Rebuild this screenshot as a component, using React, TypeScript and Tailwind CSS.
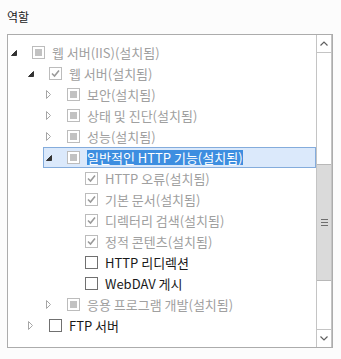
import React from 'react';

type Row = {
  level: number;
  exp: 'open' | 'closed' | 'none';
  cb: 'ind' | 'chk' | 'empty';
  text: string;
  enabled?: boolean;
  selected?: boolean;
};

const rows: Row[] = [
  { level: 0, exp: 'open', cb: 'ind', text: '웹 서버(IIS)(설치됨)' },
  { level: 1, exp: 'open', cb: 'chk', text: '웹 서버(설치됨)' },
  { level: 2, exp: 'closed', cb: 'ind', text: '보안(설치됨)' },
  { level: 2, exp: 'closed', cb: 'ind', text: '상태 및 진단(설치됨)' },
  { level: 2, exp: 'closed', cb: 'ind', text: '성능(설치됨)' },
  { level: 2, exp: 'open', cb: 'ind', text: '일반적인 HTTP 기능(설치됨)', selected: true },
  { level: 3, exp: 'none', cb: 'chk', text: 'HTTP 오류(설치됨)' },
  { level: 3, exp: 'none', cb: 'chk', text: '기본 문서(설치됨)' },
  { level: 3, exp: 'none', cb: 'chk', text: '디렉터리 검색(설치됨)' },
  { level: 3, exp: 'none', cb: 'chk', text: '정적 콘텐츠(설치됨)' },
  { level: 3, exp: 'none', cb: 'empty', text: 'HTTP 리디렉션', enabled: true },
  { level: 3, exp: 'none', cb: 'empty', text: 'WebDAV 게시', enabled: true },
  { level: 2, exp: 'closed', cb: 'ind', text: '응용 프로그램 개발(설치됨)' },
  { level: 1, exp: 'closed', cb: 'empty', text: 'FTP 서버', enabled: true },
];

const indent = ['pl-0', 'pl-[17px]', 'pl-[35px]', 'pl-[53px]'];

function Expander({ kind }: { kind: Row['exp'] }) {
  if (kind === 'open')
    return (
      <svg width="6" height="6" viewBox="0 0 6 6">
        <polygon points="5.5,0.5 5.5,5.5 0.5,5.5" fill="#333" stroke="#333" strokeWidth="1" />
      </svg>
    );
  if (kind === 'closed')
    return (
      <svg width="6" height="9" viewBox="0 0 6 9">
        <polygon points="0.5,0.5 4.5,4.5 0.5,8.5" fill="none" stroke="#a6a6a6" strokeWidth="1" />
      </svg>
    );
  return null;
}

function Check({ kind }: { kind: Row['cb'] }) {
  if (kind === 'empty')
    return <span className="w-[13px] h-[13px] border border-[#707070] bg-white shrink-0" />;
  if (kind === 'ind')
    return (
      <span className="w-[13px] h-[13px] border border-[#bcbcbc] bg-white shrink-0 flex items-center justify-center">
        <span className="w-[7px] h-[7px] bg-[#c2c2c2]" />
      </span>
    );
  return (
    <span className="w-[13px] h-[13px] border border-[#bcbcbc] bg-white shrink-0 flex items-center justify-center">
      <svg width="11" height="11" viewBox="0 0 11 11">
        <path d="M2 5.5 L4.5 8 L9 2.5" fill="none" stroke="#9a9a9a" strokeWidth="1.6" />
      </svg>
    </span>
  );
}

function TreeRow({ row }: { row: Row }) {
  return (
    <div className={`h-[21px] flex ${indent[row.level]}`}>
      <div
        className={`flex-1 flex items-center border ${
          row.selected ? 'bg-[#dbe9fb] border-[#84acdc]' : 'border-transparent'
        }`}
      >
        <div className="w-[23px] shrink-0 pl-[2px] flex items-center">
          <Expander kind={row.exp} />
        </div>
        <Check kind={row.cb} />
        <span
          className={`ml-[7px] text-[13px] leading-[15px] whitespace-nowrap ${
            row.selected
              ? 'bg-[#3d8ee0] text-white'
              : row.enabled
              ? 'text-[#1a1a1a]'
              : 'text-[#a0a0a0]'
          }`}
        >
          {row.text}
        </span>
      </div>
    </div>
  );
}

export default function App() {
  return (
    <div
      className="w-[341px] h-[359px] bg-[#fcfcfc] pt-[9px] pl-[7px]"
      style={{ fontFamily: '"Noto Sans CJK KR", "Noto Sans", sans-serif' }}
    >
      <div className="text-[12px] leading-[16px] text-[#222]">역할</div>

      <div className="mt-[9px] w-[326px] h-[314px] border border-[#acacac] bg-white flex">
        {/* 트리 */}
        <div className="flex-1 pt-[7px] flex flex-col">
          {rows.map((r, i) => (
            <TreeRow key={i} row={r} />
          ))}
        </div>

        {/* 스크롤바 */}
        <div className="w-[16px] border-l border-r border-[#c4c4c4] flex flex-col">
          <div className="h-[18px] border-b border-[#c4c4c4] flex items-center justify-center">
            <svg width="8" height="5" viewBox="0 0 8 5">
              <path d="M0.5 4.5 L4 1 L7.5 4.5" fill="none" stroke="#606060" strokeWidth="1.2" />
            </svg>
          </div>
          <div className="h-[111px]" />
          <div className="h-[117px] bg-[#dadada] border-y border-[#b8b8b8] flex items-center justify-center">
            <div className="flex flex-col gap-[2px]">
              <span className="w-[7px] h-px bg-[#6e6e6e]" />
              <span className="w-[7px] h-px bg-[#6e6e6e]" />
              <span className="w-[7px] h-px bg-[#6e6e6e]" />
            </div>
          </div>
          <div className="flex-1" />
          <div className="h-[18px] border-t border-[#c4c4c4] flex items-center justify-center">
            <svg width="8" height="5" viewBox="0 0 8 5">
              <path d="M0.5 0.5 L4 4 L7.5 0.5" fill="none" stroke="#606060" strokeWidth="1.2" />
            </svg>
          </div>
        </div>
      </div>
    </div>
  );
}
